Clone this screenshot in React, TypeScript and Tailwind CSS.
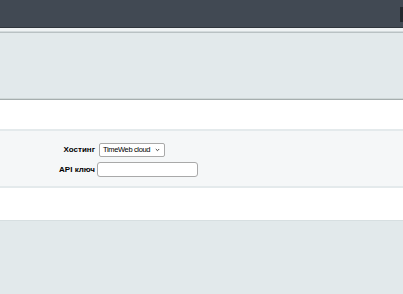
import React from 'react';

export default function App() {
  return (
    <div className="w-[403px] h-[294px] overflow-hidden bg-[#e2e9eb] font-['Liberation_Sans',Arial,sans-serif]">
      <div className="relative h-[28px] bg-[#414953] border-b border-[#2f353c]">
        <div className="absolute right-0 top-[7px] w-[3px] h-[15px] bg-[#23282e]" />
      </div>
      <div className="h-[4px] bg-[#eef2f3] border-b border-[#d3dadc]" />
      <div className="h-[1px] bg-[#b9c1c3]" />
      <div className="h-[65px] bg-[#e2e9eb]" />
      <div className="h-[1px] bg-[#d0d8d8]" />
      <div className="h-[1px] bg-[#a6aeae]" />
      <div className="bg-white">
        <div className="h-[29px]" />
        <div className="border-t-2 border-b-2 border-[#e4eaec] bg-[#f5f7f8] pt-[12px] pb-[9px]">
          <div className="flex items-center h-[14px]">
            <div className="w-[96px] pr-[1px] text-right text-[8px] leading-none font-bold text-black whitespace-nowrap">Хостинг</div>
            <div className="flex items-center h-[14px] w-[66px] ml-[3px] border border-[#a9a9a9] rounded-[2px] bg-white pl-[3px] text-[7.5px] tracking-[-0.35px] leading-none text-black whitespace-nowrap">
              <span>TimeWeb cloud</span>
              <svg className="ml-auto mr-[4px]" width="5" height="4" viewBox="0 0 5 4"><path d="M0.8 1l1.7 1.7L4.2 1" fill="none" stroke="#333" strokeWidth="0.9" /></svg>
            </div>
          </div>
          <div className="flex items-center h-[15px] mt-[5px]">
            <div className="w-[96px] pr-[1px] text-right text-[8px] leading-none font-bold text-black whitespace-nowrap">API ключ</div>
            <div className="h-[15px] w-[101px] ml-[1px] border border-[#a9a9a9] rounded-[3px] bg-white" />
          </div>
        </div>
        <div className="h-[33px] border-b border-[#d7dfe1]" />
      </div>
    </div>
  );
}
